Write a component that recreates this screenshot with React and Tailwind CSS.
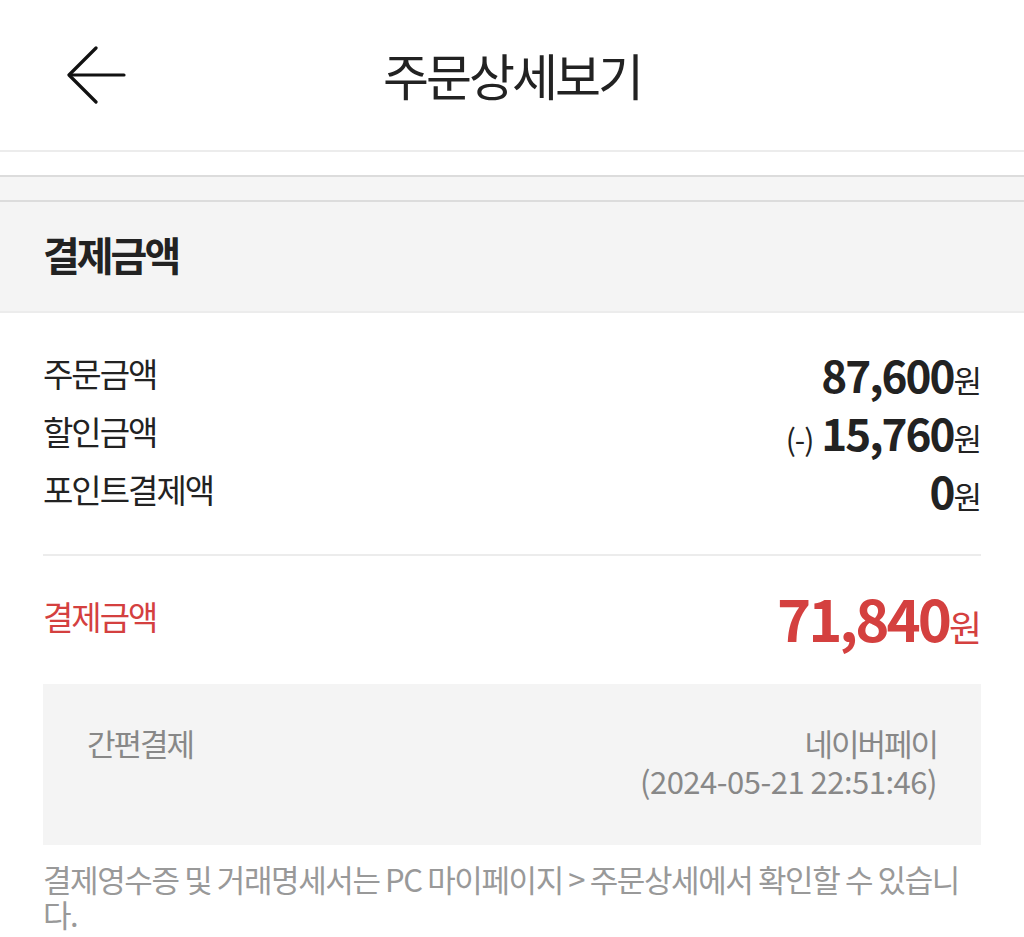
import React from 'react';

const font = { fontFamily: '"Noto Sans CJK KR", "Noto Sans", sans-serif' };

function Row({ label, prefix, amount }) {
  return (
    <div className="flex items-center justify-between h-[58px]">
      <span className="text-[33px] text-[#222] tracking-[-2px]">{label}</span>
      <span className="flex items-baseline text-[#222]">
        {prefix && <span className="text-[30px] mr-[8px] tracking-[-1px]">{prefix}</span>}
        <span className="text-[44px] font-bold tracking-[-2px]">{amount}</span>
        <span className="text-[31px] tracking-[-1px]">원</span>
      </span>
    </div>
  );
}

export default function App() {
  return (
    <div className="w-[1024px] h-[937px] bg-white overflow-hidden" style={font}>
      {/* Header */}
      <div className="relative h-[152px] flex items-center justify-center border-b-2 border-[#ececec]">
        <button className="absolute left-[66px] top-[46px]">
          <svg width="60" height="60" viewBox="0 0 60 60" fill="none" stroke="#111" strokeWidth="3.2" strokeLinecap="round" strokeLinejoin="round">
            <path d="M58 29H4" />
            <path d="M30 2L3 29L30 56" />
          </svg>
        </button>
        <h1 className="text-[50px] text-[#222] tracking-[-3px] mb-[2px]">주문상세보기</h1>
      </div>
      <div className="h-[25px] bg-white border-b-2 border-[#dcdcdc]" />
      <div className="h-[25px] bg-[#f5f5f5] border-b-2 border-[#dcdcdc]" />

      {/* Section title */}
      <div className="h-[111px] bg-[#f4f4f4] border-b-2 border-[#ececec] flex items-center px-[43px]">
        <h2 className="text-[40px] font-bold text-[#222] tracking-[-3px] pb-[6px]">결제금액</h2>
      </div>

      <div className="px-[43px]">
        <div className="pt-[32px] pb-[35px] border-b-2 border-[#ececec]">
          <Row label="주문금액" amount="87,600" />
          <Row label="할인금액" prefix="(-)" amount="15,760" />
          <Row label="포인트결제액" amount="0" />
        </div>

        <div className="flex items-center justify-between h-[122px] mb-[6px]">
          <span className="text-[33px] text-[#d4403f] tracking-[-2px]">결제금액</span>
          <span className="flex items-baseline text-[#d4403f]">
            <span className="text-[58px] font-bold tracking-[-3px]">71,840</span>
            <span className="text-[36px] tracking-[-1px]">원</span>
          </span>
        </div>

        <div className="bg-[#f4f4f4] h-[161px] flex justify-between px-[44px] pt-[40px]">
          <span className="text-[31px] text-[#888] tracking-[-2px] leading-[38px]">간편결제</span>
          <div className="text-right text-[31px] text-[#888] leading-[38px]">
            <div className="tracking-[-2px]">네이버페이</div>
            <div className="tracking-[-0.5px]">(2024-05-21 22:51:46)</div>
          </div>
        </div>

        <p className="mt-[16px] text-[31px] leading-[35px] text-[#999] tracking-[-1.4px]">
          결제영수증 및 거래명세서는 PC 마이페이지 &gt; 주문상세에서 확인할 수 있습니다.
        </p>
      </div>
    </div>
  );
}
